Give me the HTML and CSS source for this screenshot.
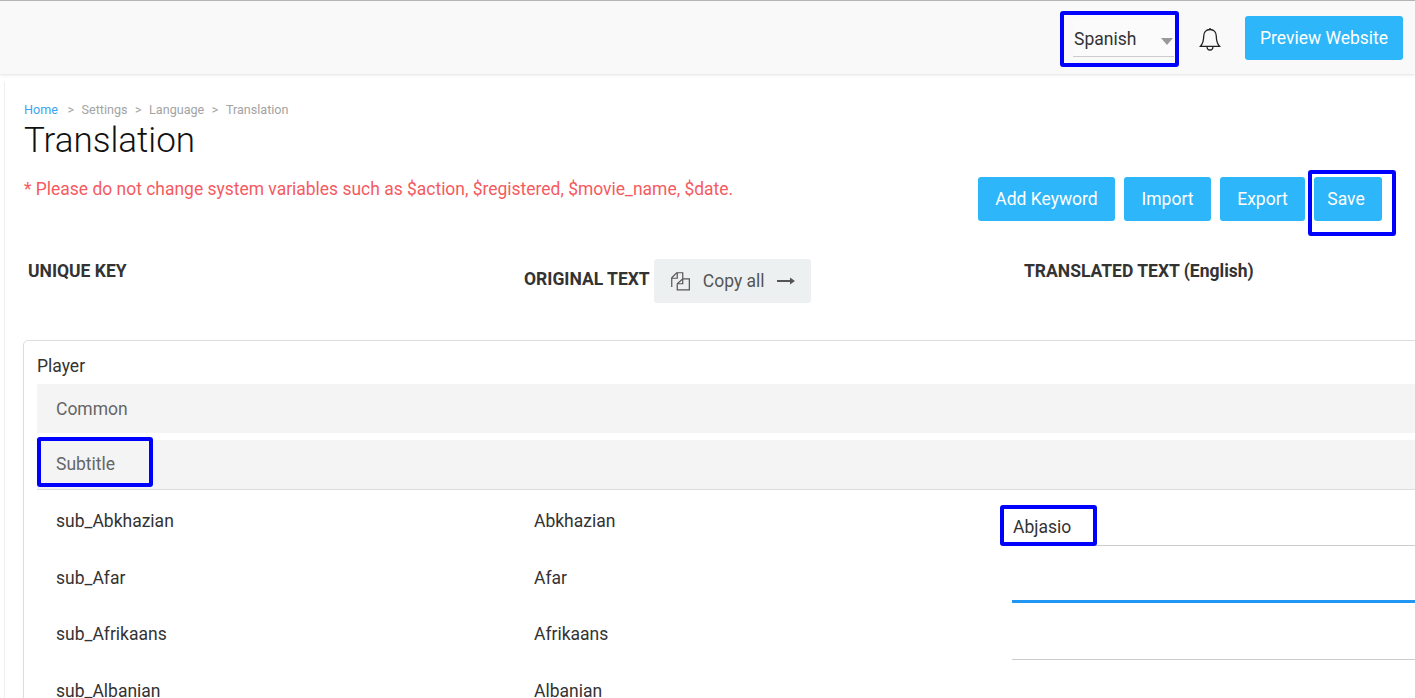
FILE: index.html
```html
<!DOCTYPE html>
<html lang="en">
<head>
<meta charset="utf-8">
<title>Translation</title>
<link rel="stylesheet" href="styles.css">
</head>
<body>
<header class="topbar">
  <div class="lang-select">
    <span class="lang-value">Spanish</span>
    <i class="caret"></i>
    <b class="mark mark-lang"></b>
  </div>
  <svg class="bell" width="22" height="26" viewBox="0 0 22 26" fill="none" stroke="#222" stroke-width="1.3">
    <path d="M11 2.500c-4 0-6.300 3-6.300 6.800 0 5-1 7.500-3.200 10h19c-2.200-2.500-3.200-5-3.200-10 0-3.800-2.300-6.800-6.300-6.800z"/>
    <path d="M8 19.500c0 2.200 1.300 3.500 3 3.500s3-1.300 3-3.500"/>
    <path d="M11 2.500V1"/>
  </svg>
  <button class="btn btn-preview">Preview Website</button>
</header>
<main class="page">
  <nav class="crumbs">
    <a class="crumb-home">Home</a><span class="sep">&gt;</span><span>Settings</span><span class="sep">&gt;</span><span>Language</span><span class="sep">&gt;</span><span>Translation</span>
  </nav>
  <h1 class="title">Translation</h1>
  <div class="toolbar">
    <p class="warning">* Please do not change system variables such as $action, $registered, $movie_name, $date.</p>
    <div class="actions">
      <button class="btn btn-add">Add Keyword</button>
      <button class="btn btn-import">Import</button>
      <button class="btn btn-export">Export</button>
      <button class="btn btn-save">Save<b class="mark mark-save"></b></button>
    </div>
  </div>
  <div class="columns">
    <div class="col col-key">UNIQUE KEY</div>
    <div class="col col-orig">
      <span class="orig-label">ORIGINAL TEXT</span>
      <button class="copy">
        <svg class="copy-icon" width="22" height="22" viewBox="0 0 20 20" fill="none" stroke="#555" stroke-width="1.1">
          <path d="M2.500 15.500V7l4.500-4.500h5.500V8"/><path d="M2.500 7.500H7.500V2.500"/>
          <path d="M7.500 18V12.500L12.500 8h6v10z"/><path d="M7.500 12.500h5V8"/>
        </svg>
        <span>Copy all</span>
        <svg width="18" height="8" viewBox="0 0 18 8"><path d="M0 3h13V.5L18 4l-5 3.500V5H0z" fill="#555"/></svg>
      </button>
    </div>
    <div class="col col-trans">TRANSLATED TEXT (English)</div>
  </div>
  <section class="card">
    <div class="card-title">Player</div>
    <div class="group group-first">Common</div>
    <div class="group group-open">Subtitle<b class="mark mark-sub"></b></div>
    <div class="row">
      <div class="cell-key">sub_Abkhazian</div>
      <div class="cell-orig">Abkhazian</div>
      <div class="field"><span class="field-value">Abjasio</span><b class="mark mark-abj"></b></div>
    </div>
    <div class="row">
      <div class="cell-key">sub_Afar</div>
      <div class="cell-orig">Afar</div>
      <div class="field field-active"></div>
    </div>
    <div class="row">
      <div class="cell-key">sub_Afrikaans</div>
      <div class="cell-orig">Afrikaans</div>
      <div class="field"></div>
    </div>
    <div class="row">
      <div class="cell-key">sub_Albanian</div>
      <div class="cell-orig">Albanian</div>
      <div class="field"></div>
    </div>
  </section>
</main>
</body>
</html>
```
FILE: styles.css
```css
* { box-sizing: border-box; }
html, body { margin: 0; height: 698px; overflow: hidden; }
body { background: #fff; font-family: Roboto, "Liberation Sans", sans-serif; color: #333; }

.topbar {
  height: 74px;
  display: flex;
  align-items: flex-start;
  justify-content: flex-end;
  background: #f9f9f9;
  border-top: 1px solid #b5b5b5;
  box-shadow: 0 1px 3px rgba(0,0,0,.12);
  padding: 15px 12px 0 0;
}
.lang-select {
  width: 101px;
  height: 37px;
  margin: 4px 25px 0 0;
  display: flex;
  align-items: center;
  font-size: 17.5px;
  color: #333;
  background: #fbfbfb;
  border-bottom: 1px solid #ccc;
  position: relative;
}
.lang-value { padding: 2px 0 0 1px; }
.caret {
  position: absolute;
  right: 1px;
  top: 18px;
  border: 6.5px solid transparent;
  border-top: 7px solid #999;
  border-bottom: 0;
}
.bell { margin: 11px 24px 0 0; }

.btn {
  border: 0;
  border-radius: 3px;
  background: #2db6f9;
  color: #fff;
  font-family: inherit;
  font-size: 17.5px;
  height: 44px;
  padding: 0;
}
.btn-preview { width: 158px; }

.mark {
  position: absolute;
  border: 4px solid #0000ff;
  border-radius: 3px;
  pointer-events: none;
}
.mark-lang { left: -13px; top: -9px; width: 119px; height: 56px; }

.page {
  margin-left: 4px;
  border-left: 1px solid #eee;
  margin-top: 8px;
  height: 620px;
  padding: 20px 0 0 19px;
}
.crumbs { font-size: 12.6px; line-height: 16px; color: #a3a3a3; display: flex; }
.crumb-home { color: #3ba4f0; margin-right: 2px; }
.sep { margin: 0 7.5px; }
.title { margin: 1px 0 -1px; font-size: 35px; font-weight: 300; line-height: 44px; color: #111; }
.toolbar { display: flex; justify-content: space-between; align-items: flex-start; }
.warning { margin: 15px 0 0; font-size: 17.47px; line-height: 24px; color: #f55a5f; }
.actions { display: flex; gap: 9px; margin: 15px 33px 0 0; }
.btn-add { width: 137px; }
.btn-import { width: 87px; }
.btn-export { width: 85px; }
.btn-save { width: 68px; padding-right: 4px; position: relative; }
.mark-save { left: -6px; top: -7px; width: 88px; height: 66px; }

.columns { display: flex; margin-top: 38px; height: 81px; font-size: 17.5px; font-weight: 700; color: #333; }
.col { line-height: 24px; flex: none; }
.col-key { width: 500px; padding-left: 4px; }
.col-orig { width: 500px; display: flex; align-items: flex-start; gap: 4px; }
.orig-label { margin-top: 8px; }
.copy {
  width: 157px; height: 44px;
  border: 0; border-radius: 3px;
  background: #edf0f1;
  color: #555;
  font-family: inherit;
  font-size: 17.5px;
  display: flex; align-items: center; justify-content: center; gap: 12px;
}
.copy-icon { margin-left: -1px; }

.card {
  width: 1500px;
  height: 400px;
  border: 1px solid #ddd;
  border-radius: 5px;
  margin-left: -1px;
  padding: 14px 0 0 13px;
}
.card-title { font-size: 17.5px; line-height: 22px; margin-bottom: 7px; }
.group {
  height: 49px;
  background: #f4f4f4;
  padding-left: 19px;
  font-size: 17.5px;
  line-height: 49px;
  color: #666;
  margin-bottom: 7px;
  position: relative;
}
.group-first { line-height: 50px; }
.group-open { border-bottom: 1px solid #ddd; margin-bottom: 0; height: 50px; }
.mark-sub { left: 0; top: -3px; width: 116px; height: 50px; }
.row { display: flex; height: 56.67px; font-size: 17.5px; }
.row > * { flex: none; }
.cell-key { width: 497px; padding: 20px 0 0 19px; line-height: 22px; }
.cell-orig { width: 478px; padding: 20px 0 0 0; line-height: 22px; }
.field {
  width: 600px;
  height: 56.4px;
  border-bottom: 1px solid #ccc;
  padding-top: 26px;
  line-height: 22px;
  position: relative;
}
.field-value { padding-left: 1px; }
.field-active { border-bottom: 3px solid #2196f3; }
.mark-abj { left: -12px; top: 15px; width: 97px; height: 41px; }
```
